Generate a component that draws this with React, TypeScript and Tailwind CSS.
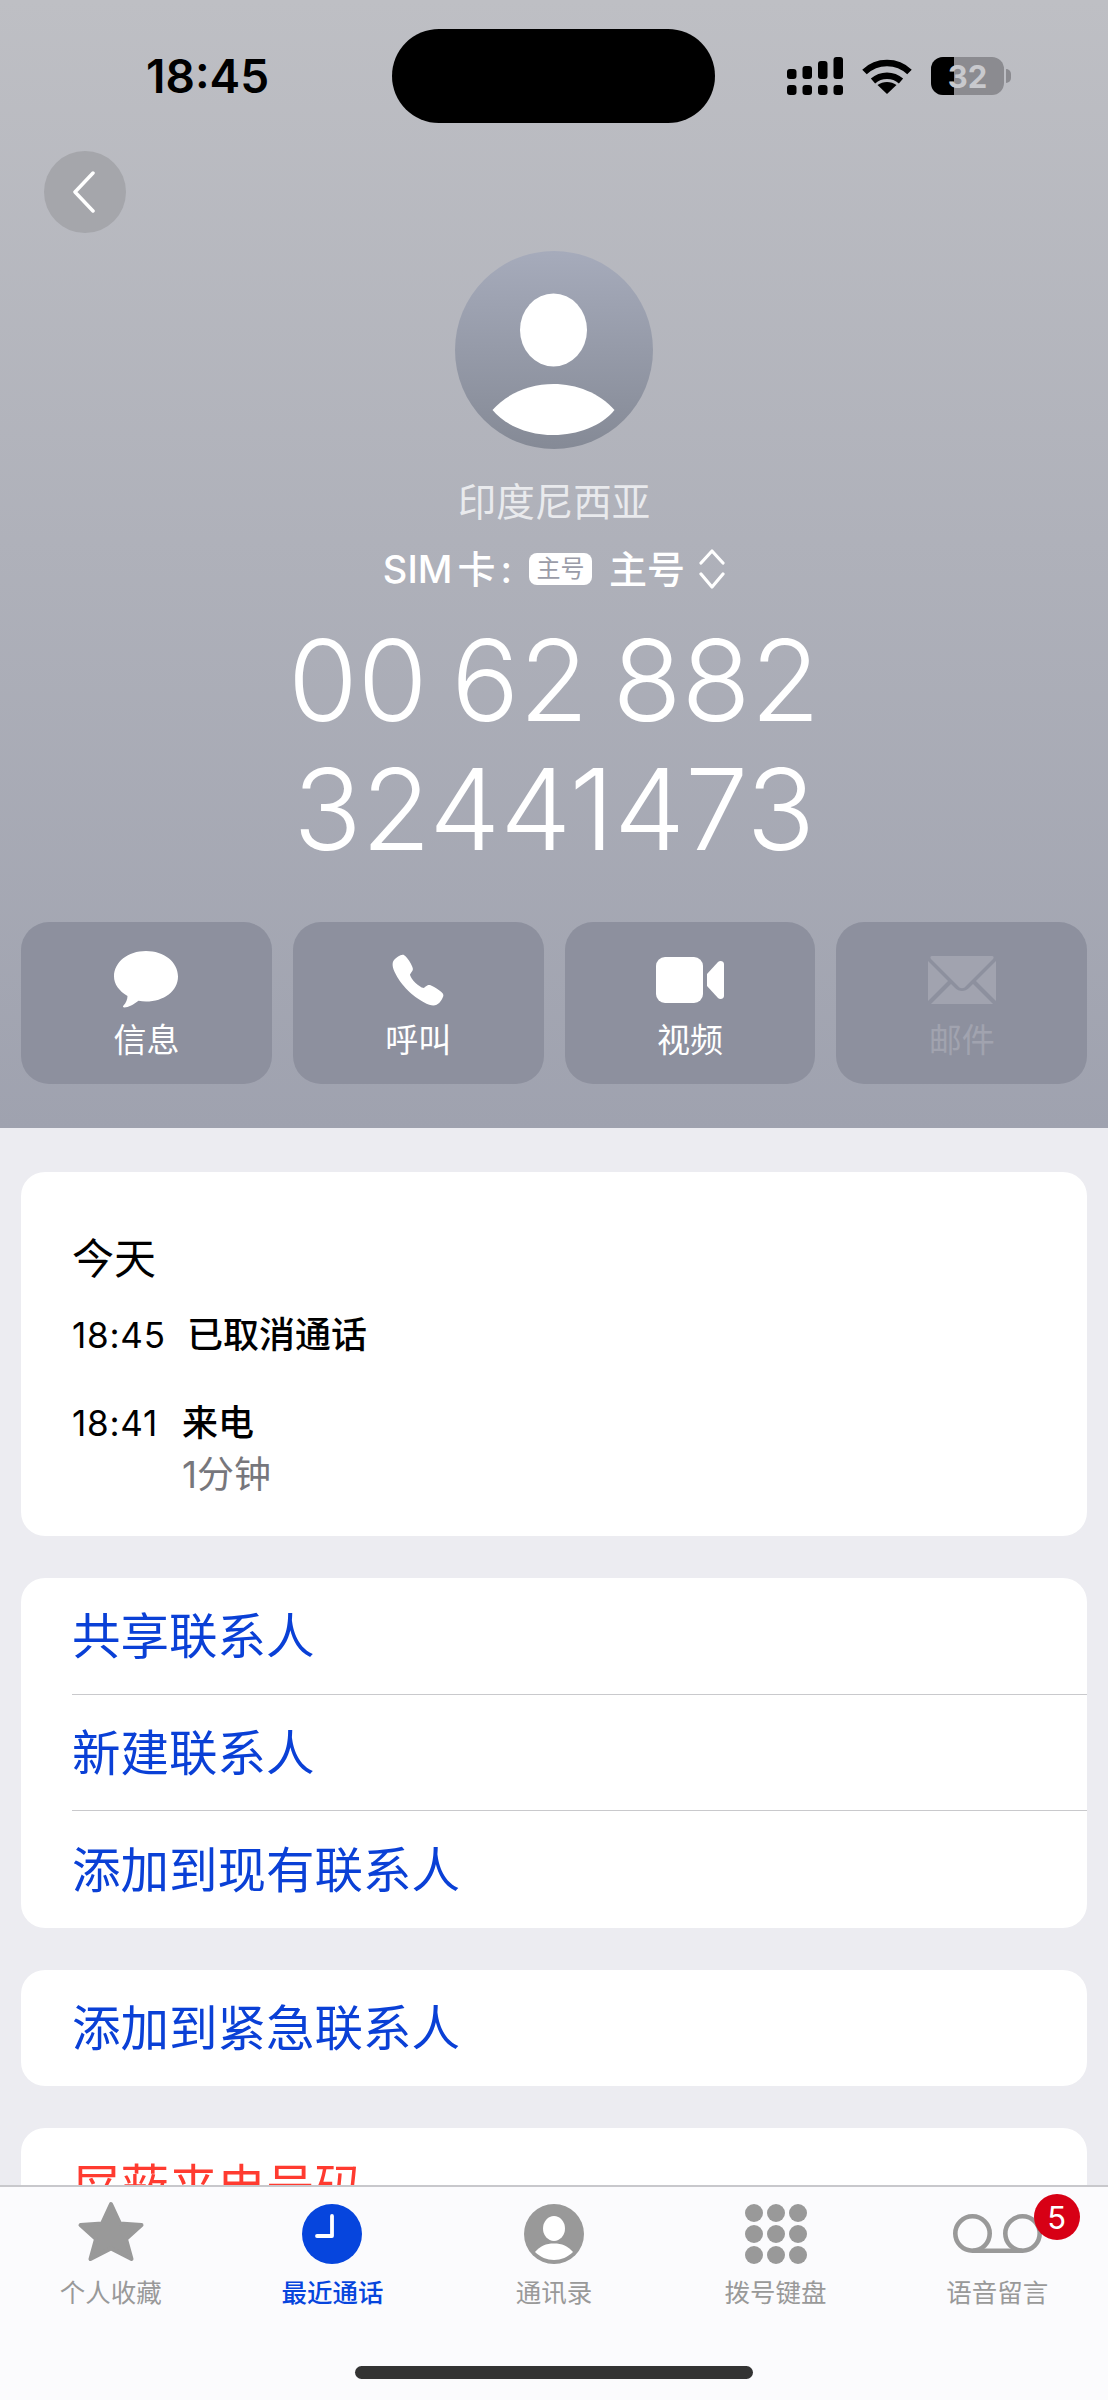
import { IoCall } from "react-icons/io5";

const sheetRows = ["共享联系人", "新建联系人", "添加到现有联系人"];

function SignalIcon() {
    const bars = [
        { x: 0, y: 12, h: 10 },
        { x: 15.5, y: 9, h: 13 },
        { x: 31, y: 4, h: 18 },
        { x: 46.5, y: 0, h: 22 },
    ];
    return (
        <svg width="56" height="38" viewBox="0 0 56 38" fill="#000">
            {bars.map((b) => (
                <rect key={b.x} x={b.x} y={b.y} width="9.5" height={b.h} rx="3" />
            ))}
            {bars.map((b) => (
                <rect key={b.x} x={b.x} y="28" width="9.5" height="10" rx="3" />
            ))}
        </svg>
    );
}

function WifiIcon() {
    return (
        <svg width="50" height="36" viewBox="0 0 50 36" fill="none" stroke="#000" strokeWidth="6.5">
            <path d="M2.5 14 C15 2 35 2 47.5 14" />
            <path d="M11 23 C19 16 31 16 39 23" />
            <path d="M25 36 L15.5 27 C21 23 29 23 34.5 27 Z" fill="#000" stroke="none" />
        </svg>
    );
}

function Battery() {
    return (
        <div className="flex items-center gap-[2px]">
            <div className="relative flex h-[38px] w-[73px] items-center justify-center overflow-hidden rounded-[12px] bg-[#8b8b90]">
                <div className="absolute inset-y-0 left-0 w-[23px] bg-black" />
                <span className="relative text-[31px] font-bold leading-none text-[#c8c9cd]">32</span>
            </div>
            <div className="h-[14px] w-[5px] rounded-r-full bg-[#8b8b90]" />
        </div>
    );
}

function StatusBar() {
    return (
        <div className="flex items-center pt-[29px]">
            <div className="w-[392px] pl-[146px] text-[46px] font-semibold leading-[94px] text-black">18:45</div>
            <div className="h-[94px] w-[323px] rounded-full bg-black" />
            <div className="flex items-center pl-[72px]">
                <SignalIcon />
                <div className="ml-[19px] mr-[19px]">
                    <WifiIcon />
                </div>
                <Battery />
            </div>
        </div>
    );
}

function Avatar() {
    return (
        <svg width="198" height="198" viewBox="0 0 198 198" className="mx-auto mt-[18px] block">
            <defs>
                <linearGradient id="avatarFill" x1="0" y1="0" x2="0" y2="1">
                    <stop offset="0" stopColor="#a6abbb" />
                    <stop offset="1" stopColor="#858a96" />
                </linearGradient>
            </defs>
            <circle cx="99" cy="99" r="99" fill="url(#avatarFill)" />
            <ellipse cx="98.5" cy="79" rx="33.5" ry="36.5" fill="#fff" />
            <path d="M37.5 159 C52.5 142 75.5 133 98.5 133 C121.5 133 144.5 142 159.5 159 C146.5 175 122.5 184 98.5 184 C74.5 184 50.5 175 37.5 159Z" fill="#fff" />
        </svg>
    );
}

function ActionButton({ label, muted, children }: { label: string; muted?: boolean; children: React.ReactNode }) {
    return (
        <div className="flex h-[162px] flex-col items-center rounded-[28px] bg-[#8d909e]">
            <div className="flex h-[96px] w-full items-end justify-center pb-[10px]">{children}</div>
            <div className={`text-[33px] leading-[44px] ${muted ? "text-[#a1a3af]" : "text-white"}`}>{label}</div>
        </div>
    );
}

function ContactHeader() {
    return (
        <div className="h-[1128px] bg-gradient-to-b from-[#bebfc4] to-[#9fa2af]">
            <StatusBar />
            <div className="ml-[44px] mt-[28px] flex h-[82px] w-[82px] items-center justify-center rounded-full bg-[#a5a6ab]">
                <svg width="24" height="42" viewBox="0 0 24 42" fill="none" stroke="#fff" strokeWidth="3.5" strokeLinecap="round" strokeLinejoin="round" className="-ml-[3px]">
                    <path d="M21 2 L3 21 L21 40" />
                </svg>
            </div>
            <Avatar />
            <div className="mt-[31px] text-center text-[38.5px] leading-[44px] text-[#e9eaed]">印度尼西亚</div>
            <div className="mt-[23px] flex h-[44px] items-center justify-center text-[38px] font-medium text-white">
                <span className="[word-spacing:-5px]">SIM 卡</span>
                <span className="ml-[5px]">:</span>
                <span className="ml-[17px] mr-[17px] flex h-[32px] w-[63px] items-center justify-center rounded-[8px] bg-white text-[24px] font-normal leading-none text-[#9a9ca8]">主号</span>
                <span>主号</span>
                <svg width="26" height="40" viewBox="0 0 26 40" fill="none" stroke="#fff" strokeWidth="3.2" strokeLinecap="round" strokeLinejoin="round" className="ml-[14px]">
                    <path d="M2 14 L13 2 L24 14" />
                    <path d="M2 25 L13 38 L24 25" />
                </svg>
            </div>
            <div className="mt-[25px] text-center text-[113px] font-light leading-[129px] text-white">
                <div className="[word-spacing:-8px]">00 62 882</div>
                <div>32441473</div>
            </div>
            <div className="mt-[48px] grid grid-cols-4 gap-[21px] px-[21px]">
                <ActionButton label="信息">
                    <svg width="64" height="57" viewBox="0 0 64 57" fill="#fff">
                        <path d="M32 0 C50 0 64 11 64 25.5 C64 40 50 50.5 32 50.5 C29.5 50.5 27 50.2 24.5 49.8 C20 53.5 14 56.5 10.5 56.5 C9 56.5 8.5 55.5 9.5 54.5 C12 52 13.5 48 13.5 45 C5 40 0 33 0 25.5 C0 11 14 0 32 0Z" />
                    </svg>
                </ActionButton>
                <ActionButton label="呼叫">
                    <IoCall size={58} color="#fff" className="mb-[-1px]" />
                </ActionButton>
                <ActionButton label="视频">
                    <svg width="68" height="46" viewBox="0 0 68 46" fill="#fff" className="mb-[5px]">
                        <rect x="0" y="0" width="47" height="46" rx="9" />
                        <path d="M51 17 L62 5 C64 3 68 4 68 7 L68 39 C68 42 64 43 62 41 L51 29 Z" />
                    </svg>
                </ActionButton>
                <ActionButton label="邮件" muted>
                    <svg width="68" height="48" viewBox="0 0 68 48" fill="#a1a3af" className="mb-[4px]">
                        <path d="M4 0 H64 C66 0 66 2 65 3 L38 30 C36 33 32 33 30 30 L3 3 C2 2 2 0 4 0Z" />
                        <path d="M0 5 L20 25 L0 45Z M68 5 L48 25 L68 45Z" />
                        <path d="M23 28 L27 32 C31 36 37 36 41 32 L45 28 L65 48 H3Z" />
                    </svg>
                </ActionButton>
            </div>
        </div>
    );
}

function RecentCalls() {
    return (
        <section className="h-[364px] rounded-[24px] bg-white pl-[51px] pt-[59px] text-black">
            <div className="text-[42px] leading-[56px]">今天</div>
            <div className="mt-[23px] flex h-[50px] items-center">
                <span className="w-[115px] text-[35px] tracking-[0.8px]">18:45</span>
                <span className="text-[36px] font-medium">已取消通话</span>
            </div>
            <div className="mt-[38px] flex h-[50px] items-center">
                <span className="w-[110px] text-[35px] tracking-[0.8px]">18:41</span>
                <span className="text-[36px] font-medium">来电</span>
            </div>
            <div className="ml-[110px] mt-[2px] text-[37px] leading-[50px] text-[#77777c]">1分钟</div>
        </section>
    );
}

function ActionRow({ label, divider, red }: { label: string; divider?: boolean; red?: boolean }) {
    return (
        <div className={`flex h-[116.5px] items-center pt-[4px] text-[48.5px] ${divider ? "border-b border-[#c9c9cc]" : ""} ${red ? "text-[#ff3b30]" : "text-[#0a40d6]"}`}>
            {label}
        </div>
    );
}

function TabIcon({ children }: { children: React.ReactNode }) {
    return <div className="flex h-[64px] items-end justify-center">{children}</div>;
}

const tabs: { label: string; icon: React.ReactNode; active?: boolean }[] = [
    {
        label: "个人收藏",
        icon: (
            <svg width="68" height="64" viewBox="0 0 68 64" fill="#999" stroke="#999" strokeWidth="4" strokeLinejoin="round">
                <path d="M34 4 L43 23.5 L64.5 25 L49 39 L54.5 59 L34 48.5 L13.5 59 L19 39 L3.5 25 L25 23.5Z" />
            </svg>
        ),
    },
    {
        label: "最近通话",
        active: true,
        icon: (
            <svg width="60" height="60" viewBox="0 0 60 60">
                <circle cx="30" cy="30" r="30" fill="#0645dd" />
                <path d="M30 12 V32 H15" fill="none" stroke="#fff" strokeWidth="3.8" strokeLinecap="round" strokeLinejoin="round" />
            </svg>
        ),
    },
    {
        label: "通讯录",
        icon: (
            <svg width="60" height="60" viewBox="0 0 60 60">
                <circle cx="30" cy="30" r="30" fill="#999" />
                <ellipse cx="30" cy="24.5" rx="11" ry="12.5" fill="#fff" />
                <path d="M11 48 C16 42 22 39.5 30 39.5 C38 39.5 44 42 49 48 C44 53 37 56 30 56 C23 56 16 53 11 48Z" fill="#fff" />
            </svg>
        ),
    },
    {
        label: "拨号键盘",
        icon: (
            <svg width="62" height="60" viewBox="0 0 62 60" fill="#999">
                {[9, 30, 51].map((cy) =>
                    [9, 31, 53].map((cx) => <circle key={`${cx}-${cy}`} cx={cx} cy={cy} r="9" />),
                )}
            </svg>
        ),
    },
    {
        label: "语音留言",
        icon: (
            <div className="relative">
                <svg width="89" height="39" viewBox="0 0 89 39" fill="none" stroke="#999" strokeWidth="4.6" className="mb-[11px] block">
                    <circle cx="19.5" cy="19.5" r="17.2" />
                    <circle cx="69.5" cy="19.5" r="17.2" />
                    <path d="M19.5 36.7 H69.5" />
                </svg>
                <div className="absolute -top-[20px] left-[81px] flex h-[46px] w-[46px] items-center justify-center rounded-full bg-[#d70015] text-[31px] leading-none text-white">5</div>
            </div>
        ),
    },
];

function TabBar() {
    return (
        <nav className="h-[215px] shrink-0 border-t-2 border-[#c8c8cc] bg-[#fbfbfd]">
            <div className="grid grid-cols-5 pt-[13px]">
                {tabs.map((t) => (
                    <div key={t.label} className="flex flex-col items-center">
                        <TabIcon>{t.icon}</TabIcon>
                        <div className={`mt-[14px] text-[25.5px] leading-[30px] ${t.active ? "font-medium text-[#0645dd]" : "text-[#999999]"}`}>{t.label}</div>
                    </div>
                ))}
            </div>
            <div className="mx-auto mt-[58px] h-[13px] w-[398px] rounded-full bg-[#333333]" />
        </nav>
    );
}

export default function App() {
    return (
        <div className="flex h-[2400px] w-[1108px] flex-col overflow-hidden bg-[#ececf1] font-['Inter','Noto_Sans_CJK_SC',sans-serif]">
            <div className="min-h-0 flex-1 overflow-hidden">
                <ContactHeader />
                <div className="flex flex-col gap-[42px] px-[21px] pt-[44px]">
                    <RecentCalls />
                    <section className="rounded-[24px] bg-white pl-[51px]">
                        {sheetRows.map((label, i) => (
                            <ActionRow key={label} label={label} divider={i < sheetRows.length - 1} />
                        ))}
                    </section>
                    <section className="rounded-[24px] bg-white pl-[51px]">
                        <ActionRow label="添加到紧急联系人" />
                    </section>
                    <section className="rounded-[24px] bg-white pl-[51px]">
                        <ActionRow label="屏蔽来电号码" red />
                    </section>
                </div>
            </div>
            <TabBar />
        </div>
    );
}
